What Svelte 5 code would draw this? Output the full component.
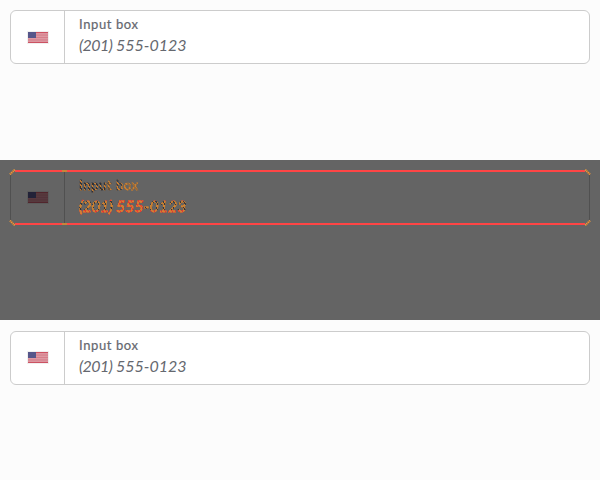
<script>
  const panels = ['before', 'diff', 'after'];
  const stripes = [0, 1, 2, 3, 4, 5, 6];
</script>

<main>
  {#each panels as kind}
    <section class={kind}>
      <div class="field">
        <div class="country">
          <svg width="22" height="13" viewBox="0 0 22 13" aria-label="United States">
            <rect class="edge" width="22" height="13" />
            <rect class="base" x="1" y="1" width="20" height="11" />
            {#each stripes as i}
              <rect class="stripe" x="1" y={1 + i * 1.692} width="20" height="0.846" />
            {/each}
            <rect class="rim" x="1" y="1" width="20" height="1" />
            <rect class="rim" x="1" y="11" width="20" height="1" />
            <rect class="canton" x="1" y="1" width="8" height="6" />
          </svg>
        </div>
        <div class="copy">
          <span class="label">Input box</span>
          <span class="number"><span class="area">(201)</span> 555-0123</span>
        </div>
        {#if kind === 'diff'}
          <i class="corner tl"></i><i class="corner tr"></i>
          <i class="corner bl"></i><i class="corner br"></i>
          <i class="joint"></i><i class="joint low"></i>
        {/if}
      </div>
    </section>
  {/each}
</main>

<style>
  :global(body) { margin: 0; background: #fcfcfc; }
  section { box-sizing: border-box; height: 160px; padding: 10px; background: #fcfcfc; }
  .after { padding-top: 11px; }
  .field {
    position: relative;
    box-sizing: border-box;
    display: flex;
    height: 54px;
    border: 1px solid #ccc;
    border-radius: 6px;
    background: #fff;
  }
  .country {
    box-sizing: border-box;
    width: 54px;
    display: flex;
    justify-content: center;
    padding-top: 20px;
    border-right: 1px solid #ccc;
  }
  .after .country { padding-top: 19px; }
  svg { display: block; }
  .edge { fill: #f0f0f0; }
  .base { fill: #e1a3ac; }
  .stripe { fill: #d27985; }
  .rim { fill: #cc5262; }
  .canton { fill: #56568a; }
  .copy {
    display: flex;
    flex-direction: column;
    align-items: flex-start;
    padding: 4px 0 0 14px;
    font-family: Lato, "Noto Sans", sans-serif;
    color: #65686f;
    white-space: nowrap;
  }
  .label { font-size: 13px; line-height: 18px; letter-spacing: 0.6px; -webkit-text-stroke: 0.2px #65686f; }
  .number { font-size: 16px; line-height: 22px; margin-top: 1px; font-style: italic; letter-spacing: -0.03px; }
  .area { letter-spacing: -0.55px; }

  .diff { background: #646464; }
  .diff .field {
    height: 55px;
    border: 2px solid #ff4545;
    border-left: 1px solid #505050;
    border-right: 1px solid #505050;
    background: #646464;
  }
  .diff .country { border-color: #505050; padding-top: 19px; }
  .diff .edge { fill: #5c5c5c; }
  .diff .base { fill: #593d41; }
  .diff .stripe { fill: #523238; }
  .diff .rim { fill: #51252c; }
  .diff .canton { fill: #222238; }
  .diff .label, .diff .number {
    color: transparent;
    background-clip: text;
    -webkit-background-clip: text;
    -webkit-text-stroke: 0.8px transparent;
  }
  .diff .label {
    background-image:
      repeating-linear-gradient(50deg, #c98034 0 1.4px, transparent 1.4px 3px),
      linear-gradient(90deg, #2e3038 0 26px, #6b5037 26px 36px, #3d3e44 36px 43px, #9c6b38 43px);
  }
  .diff .number {
    background-image:
      repeating-linear-gradient(60deg, #d18332 0 2px, transparent 2px 3px),
      linear-gradient(90deg, transparent 37px, #f33a30 37px 66px, transparent 66px),
      linear-gradient(#f72d2d 0 6px, #343840 6px 10px, #c77c2d 10px 12px, #303239 12px 15px, #ed352f 15px);
  }
  .corner, .joint { position: absolute; background: #c98439; }
  .corner { width: 5px; height: 5px; background: #646464; }
  .corner::after { content: ''; position: absolute; left: -1px; top: 1px; width: 7px; height: 2.4px; background: repeating-linear-gradient(90deg, #e09642 0 1px, #b9783a 1px 2px); transform: rotate(-45deg); }
  .tl { left: -1px; top: -2px; }
  .tr { right: -1px; top: -2px; transform: scaleX(-1); }
  .bl { left: -1px; bottom: -2px; transform: scaleY(-1); }
  .br { right: -1px; bottom: -2px; transform: scale(-1); }
  .joint { left: 51px; top: -2px; width: 5px; height: 2px; }
  .joint.low { top: auto; bottom: -2px; }
</style>
